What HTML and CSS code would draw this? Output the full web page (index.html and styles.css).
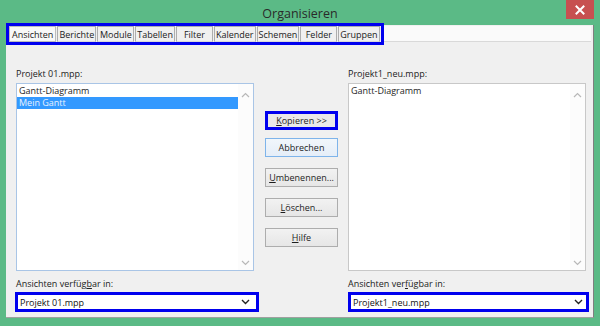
FILE: index.html
```html
<!DOCTYPE html>
<html lang="de">
<head>
<meta charset="utf-8">
<title>Organisieren</title>
<link rel="stylesheet" href="styles.css">
</head>
<body>
<div class="window">
  <div class="titlebar">
    <span class="title">Organisieren</span>
    <button class="close" aria-label="Schließen">
      <svg width="10" height="10" viewBox="0 0 10 10"><path d="M1.5 1.5 L8.5 8.5 M8.5 1.5 L1.5 8.5" stroke="#fff" stroke-width="2" stroke-linecap="square"/></svg>
    </button>
  </div>
  <div class="panel">
    <div class="tabrow">
      <div class="tabs">
        <span class="tab active">Ansichten</span>
        <span class="tab">Berichte</span>
        <span class="tab">Module</span>
        <span class="tab">Tabellen</span>
        <span class="tab">Filter</span>
        <span class="tab">Kalender</span>
        <span class="tab">Schemen</span>
        <span class="tab">Felder</span>
        <span class="tab">Gruppen</span>
      </div>
      <div class="tabfill"></div>
    </div>
    <div class="content">
      <div class="column">
        <div class="label">Projekt 01.mpp:</div>
        <div class="listbox focused">
          <div class="items">
            <div class="item">Gantt-Diagramm</div>
            <div class="item selected">Mein Gantt</div>
          </div>
          <div class="scrollbar">
            <svg class="chev" width="9" height="6" viewBox="0 0 9 6"><path d="M1 5 L4.5 1.5 L8 5" fill="none" stroke="#b8b8b8" stroke-width="1.2"/></svg>
            <svg class="chev" width="9" height="6" viewBox="0 0 9 6"><path d="M1 1 L4.5 4.5 L8 1" fill="none" stroke="#b8b8b8" stroke-width="1.2"/></svg>
          </div>
        </div>
        <div class="label lower">Ansichten verfüg<u>b</u>ar in:</div>
        <div class="combo">
          <span>Projekt 01.mpp</span>
          <svg width="9" height="6" viewBox="0 0 9 6"><path d="M1 1 L4.5 4.5 L8 1" fill="none" stroke="#222" stroke-width="1.4"/></svg>
        </div>
      </div>
      <div class="buttons">
        <button class="btn marked"><u>K</u>opieren &gt;&gt;</button>
        <button class="btn default">Abbrechen</button>
        <button class="btn"><u>U</u>mbenennen...</button>
        <button class="btn"><u>L</u>öschen...</button>
        <button class="btn"><u>H</u>ilfe</button>
      </div>
      <div class="column">
        <div class="label">Projekt1_neu.mpp:</div>
        <div class="listbox">
          <div class="items">
            <div class="item">Gantt-Diagramm</div>
          </div>
          <div class="scrollbar">
            <svg class="chev" width="9" height="6" viewBox="0 0 9 6"><path d="M1 5 L4.5 1.5 L8 5" fill="none" stroke="#b8b8b8" stroke-width="1.2"/></svg>
            <svg class="chev" width="9" height="6" viewBox="0 0 9 6"><path d="M1 1 L4.5 4.5 L8 1" fill="none" stroke="#b8b8b8" stroke-width="1.2"/></svg>
          </div>
        </div>
        <div class="label lower">Ansichten ver<u>f</u>ügbar in:</div>
        <div class="combo right">
          <span>Projekt1_neu.mpp</span>
          <svg width="9" height="6" viewBox="0 0 9 6"><path d="M1 1 L4.5 4.5 L8 1" fill="none" stroke="#222" stroke-width="1.4"/></svg>
        </div>
      </div>
    </div>
  </div>
</div>
</body>
</html>
```

FILE: styles.css
```css
* { box-sizing: border-box; }
html, body { margin: 0; padding: 0; }
body {
  width: 600px;
  height: 326px;
  overflow: hidden;
  font-family: "Open Sans", "Noto Sans", sans-serif;
  font-size: 9px;
  color: #1e1e1e;
}
.window {
  width: 600px;
  height: 326px;
  background: #5bba86;
  position: relative;
  display: flex;
  flex-direction: column;
}
.titlebar {
  height: 25px;
  display: flex;
  align-items: center;
  justify-content: center;
}
.title {
  font-size: 12.5px;
  color: #2a2a2a;
  margin-top: 2px;
}
.close {
  position: absolute;
  top: 0;
  left: 566px;
  width: 28px;
  height: 19px;
  border: 0;
  padding: 0;
  background: #c75050;
  display: flex;
  align-items: center;
  justify-content: center;
}
.panel {
  margin-left: 6px;
  width: 588px;
  height: 293px;
  background: #f0f0f0;
  border-right: 1px solid #7f7f7f;
  border-bottom: 1px solid #a0a0a0;
  display: flex;
  flex-direction: column;
}
.tabrow {
  display: flex;
  align-items: flex-end;
  margin-top: -2px;
  height: 22px;
}
.tabs {
  display: flex;
  border: 3px solid #0000ee;
  height: 22px;
}
.tab {
  flex: none;
  min-width: 37px;
  padding: 0 1px;
  height: 16px;
  line-height: 15px;
  text-align: center;
  background: #f0f0f0;
  border: 1px solid #adadad;
  border-bottom-color: #d9d9d9;
  margin-right: 1px;
  color: #222;
}
.tab.active {
  background: #f8f8f8;
  border-color: #bcbcbc;
  padding: 0 2px;
}
.tabfill {
  flex: 1;
  height: 16px;
  margin-bottom: 3px;
  margin-right: 2px;
  background: #fafafa;
  border-bottom: 1px solid #d9d9d9;
}
.content {
  flex: 1;
  display: flex;
  padding: 0 0 0 10px;
}
.column {
  width: 238px;
  display: flex;
  flex-direction: column;
  padding-top: 22px;
}
.label {
  height: 14px;
  line-height: 14px;
  color: #222;
}
.label.lower { margin-top: 6px; }
.listbox {
  margin-top: 2px;
  height: 188px;
  background: #fff;
  border: 1px solid #c8c8c8;
  display: flex;
}
.listbox.focused { border-color: #a9c5e6; }
.items {
  flex: 1;
  padding-top: 1px;
}
.item {
  height: 12px;
  line-height: 12px;
  padding-left: 2px;
  color: #1e1e1e;
}
.item.selected {
  background: #3399ff;
  color: #e8f2ff;
}
.scrollbar {
  width: 15px;
  display: flex;
  flex-direction: column;
  justify-content: space-between;
  align-items: center;
  padding: 8px 0 4px;
  background: #fcfcfc;
}
.combo {
  margin-top: 1px;
  margin-left: -1px;
  width: 244px;
  height: 20px;
  border: 3px solid #0000ee;
  background: #fff;
  display: flex;
  align-items: center;
  justify-content: space-between;
  padding: 0 6px 0 2px;
  color: #111;
}
.combo.right { width: 241px; margin-left: 0; padding-right: 3px; }
.buttons {
  width: 73px;
  margin: 0 10px 0 11px;
  display: flex;
  flex-direction: column;
  gap: 11px;
  padding-top: 66px;
}
.btn {
  font-family: inherit;
  font-size: 9px;
  color: #1e1e1e;
  height: 19px;
  padding: 0;
  background: linear-gradient(#f2f2f2, #e6e6e6);
  border: 1px solid #adadad;
  text-align: center;
  line-height: 16px;
}
.btn.marked {
  border: 3px solid #0000ee;
  background: #e9e9e9;
  line-height: 13px;
  margin-bottom: -3px;
}
.btn.default {
  border-color: #7eb4ea;
  background: linear-gradient(#f1f6fb, #e5eef8);
}
```
